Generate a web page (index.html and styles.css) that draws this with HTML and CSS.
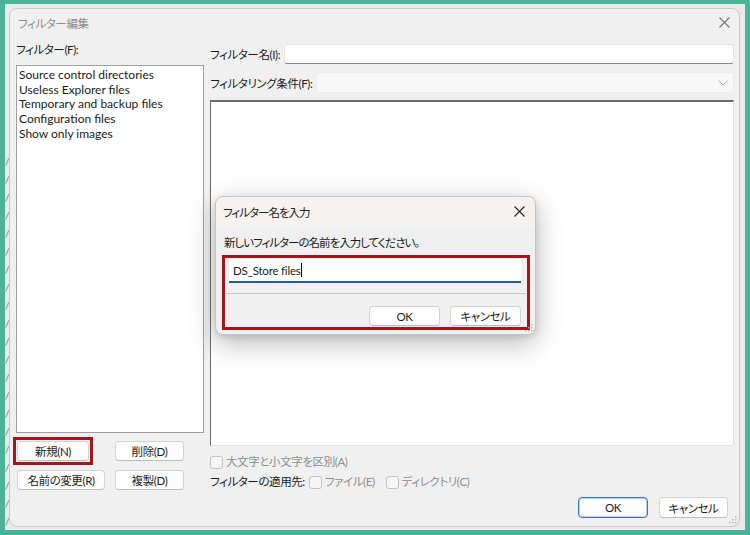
FILE: index.html
```html
<!DOCTYPE html><html lang="ja">
<head>
  <meta charset="UTF-8" />
  <meta name="viewport" content="width=device-width, initial-scale=1.0" />
  <title>フィルター編集</title>
  <link rel="stylesheet" href="styles.css">
</head>
<body>
  <div class="desk">
    <div class="behind">
      <span>/</span><span>/</span><span>/</span><span>/</span><span>/</span><span>/</span><span>/</span><span>/</span><span>/</span><span>/</span><span>/</span><span>/</span><span>/</span><span>/</span><span>/</span><span>/</span><span>/</span><span>/</span><span>/</span><span>/</span><span>/</span>
    </div>
    <div class="window">
      <div class="titlebar">
        <span class="title">フィルター編集</span>
        <svg class="close" width="11" height="11" viewBox="0 0 11 11"><path d="M0.5 0.5L10.5 10.5M10.5 0.5L0.5 10.5" stroke="#777" stroke-width="1.1" fill="none"/></svg>
      </div>
      <div class="content">
        <div class="left">
          <div class="label">フィルター(F):</div>
          <div class="listbox">
            <div>Source control directories</div>
            <div>Useless Explorer files</div>
            <div>Temporary and backup files</div>
            <div>Configuration files</div>
            <div>Show only images</div>
          </div>
          <div class="left-buttons">
            <span class="mark"><button class="btn new">新規(N)</button></span>
            <button class="btn">削除(D)</button>
            <button class="btn wide">名前の変更(R)</button>
            <button class="btn">複製(D)</button>
          </div>
        </div>
        <div class="right">
          <div class="field">
            <span class="field-label name">フィルター名(I):</span>
            <div class="input"></div>
          </div>
          <div class="field second">
            <span class="field-label cond">フィルタリング条件(F):</span>
            <div class="select">
              <svg width="10" height="6" viewBox="0 0 10 6"><path d="M0.5 0.5L5 5L9.5 0.5" stroke="#b0b0b0" stroke-width="1" fill="none"/></svg>
            </div>
          </div>
          <div class="pattern-box"></div>
          <div class="check-row muted"><span class="checkbox"></span>大文字と小文字を区別(A)</div>
          <div class="check-row apply">
            <span>フィルターの適用先:</span>
            <span class="check muted"><span class="checkbox"></span>ファイル(E)</span>
            <span class="check muted"><span class="checkbox"></span>ディレクトリ(C)</span>
          </div>
        </div>
      </div>
      <div class="footer">
        <button class="btn default">OK</button>
        <button class="btn">キャンセル</button>
      </div>
      <svg class="grip" width="8" height="8" viewBox="0 0 8 8"><g fill="#b5b5b5"><rect x="6" y="0" width="1.4" height="1.4"/><rect x="3" y="3" width="1.4" height="1.4"/><rect x="6" y="3" width="1.4" height="1.4"/><rect x="0" y="6" width="1.4" height="1.4"/><rect x="3" y="6" width="1.4" height="1.4"/><rect x="6" y="6" width="1.4" height="1.4"/></g></svg>
    </div>

    <div class="prompt">
      <div class="prompt-title">
        <span>フィルター名を入力</span>
        <svg width="11" height="11" viewBox="0 0 11 11"><path d="M0.5 0.5L10.5 10.5M10.5 0.5L0.5 10.5" stroke="#222" stroke-width="1.1" fill="none"/></svg>
      </div>
      <div class="prompt-body">
        <div class="prompt-msg">新しいフィルターの名前を入力してください。</div>
        <div class="prompt-area">
          <div class="prompt-input">DS_Store files<span class="caret"></span></div>
          <div class="sep"></div>
          <div class="prompt-buttons">
            <button class="btn">OK</button>
            <button class="btn">キャンセル</button>
          </div>
        </div>
      </div>
      <svg class="grip" width="8" height="8" viewBox="0 0 8 8"><g fill="#b5b5b5"><rect x="6" y="0" width="1.4" height="1.4"/><rect x="3" y="3" width="1.4" height="1.4"/><rect x="6" y="3" width="1.4" height="1.4"/><rect x="0" y="6" width="1.4" height="1.4"/><rect x="3" y="6" width="1.4" height="1.4"/><rect x="6" y="6" width="1.4" height="1.4"/></g></svg>
    </div>
  </div>
</body>
</html>
```

FILE: styles.css
```css
* {
  box-sizing: border-box;
}
body {
  margin: 0;
  width: 750px;
  height: 535px;
  padding: 4px 5px 5px 5px;
  background-color: #49b49a;
  font-family: Lato, "Noto Sans CJK JP", sans-serif;
  font-size: 11.5px;
  letter-spacing: -0.4px;
  font-feature-settings: "palt";
  color: #1b1b1b;
  overflow: hidden;
}
.desk {
  position: relative;
  width: 740px;
  height: 526px;
  background-color: #e9ebeb;
  padding: 4px 0 0 4px;
}
/* the app lying behind the window */
.behind {
  position: absolute;
  left: 0;
  top: 150px;
  width: 4px;
  display: flex;
  flex-direction: column;
  gap: 4px;
  font-size: 10px;
  line-height: 14px;
  color: #777;
  overflow: hidden;
}
.window {
  position: relative;
  width: 731px;
  height: 519px;
  background-color: #f0f0f0;
  border: 1px solid #c9c9c9;
  border-radius: 8px;
}
.titlebar {
  height: 27px;
  display: flex;
  align-items: center;
  justify-content: space-between;
  padding: 0 9px 0 8px;
}
.title {
  color: #8d8d8d;
}
.content {
  display: flex;
  gap: 6px;
  padding: 6px 0 0 6px;
}
.left {
  width: 188px;
}
.label {
  line-height: 16px;
  margin-bottom: 7px;
}
.listbox {
  height: 368px;
  background: #fff;
  border: 1px solid #9f9f9f;
  padding: 2px 2px;
  font-size: 12px;
  letter-spacing: 0;
  line-height: 14.7px;
}
.left-buttons {
  display: grid;
  grid-template-columns: 98px 69px;
  row-gap: 9px;
  margin-top: 8px;
  padding-left: 1px;
}
.btn {
  height: 20px;
  width: 69px;
  padding: 0;
  font-family: inherit;
  font-size: 11.5px;
  letter-spacing: -0.4px;
  font-feature-settings: "palt";
  color: #1b1b1b;
  background: #fdfdfd;
  border: 1px solid #d3d3d3;
  border-bottom-color: #bdbdbd;
  border-radius: 4px;
}
/* red annotation box round the "new" button */
.mark {
  position: relative;
  display: block;
  width: 72px;
  height: 20px;
}
.mark::after {
  content: '';
  position: absolute;
  left: -4px;
  top: -4px;
  right: -4px;
  bottom: -4px;
  border: 3px solid #a3161a;
}
.mark .new {
  width: 72px;
}
.left-buttons .wide {
  width: 88px;
}
.right {
  width: 524px;
  padding-top: 2px;
}
.field {
  display: flex;
  align-items: center;
  height: 20px;
}
.field.second {
  height: 21px;
  margin-top: 8px;
}
.field-label {
  white-space: nowrap;
  flex-shrink: 0;
}
.field-label.name {
  width: 74px;
}
.field-label.cond {
  width: 106px;
}
.input {
  flex: 1;
  height: 100%;
  background: #fff;
  border: 1px solid #e3e3e3;
  border-bottom: 1px solid #8a8a8a;
  border-radius: 3px;
}
.select {
  flex: 1;
  height: 100%;
  background: #f8f8f8;
  border: 1px solid #ececec;
  border-radius: 3px;
  display: flex;
  align-items: center;
  justify-content: flex-end;
  padding-right: 5px;
}
.pattern-box {
  height: 346px;
  margin-top: 7px;
  background: #fff;
  border: 1px solid #e3e3e3;
  border-top: 2px solid #6c6c6c;
  border-left: 1px solid #6c6c6c;
}
.check-row {
  display: flex;
  align-items: center;
  line-height: 16px;
  margin-top: 8px;
  white-space: nowrap;
}
.check-row.apply {
  margin-top: 4px;
}
.check {
  display: flex;
  align-items: center;
  margin-left: 4px;
}
.check + .check {
  margin-left: 11px;
}
.muted {
  color: #8e8e8e;
}
.checkbox {
  width: 13px;
  height: 13px;
  border: 1px solid #c3c3c3;
  border-radius: 3px;
  background: #f6f6f6;
  margin-right: 3px;
}
.footer {
  display: flex;
  justify-content: flex-end;
  gap: 11px;
  margin-top: 7px;
  padding-right: 11px;
}
.footer .btn {
  height: 21px;
}
.footer .default {
  width: 70px;
  border: 1px solid #3c77b5;
  box-shadow: inset 0 0 0 1px #b9d1ea;
}
.grip {
  position: absolute;
  right: 2px;
  bottom: 2px;
}
/* input dialog on top */
.prompt {
  position: absolute;
  left: 210px;
  top: 192px;
  width: 321px;
  height: 139px;
  background: #f0f0f0;
  border: 1px solid #c4c4c4;
  border-radius: 8px;
  box-shadow: 0 8px 28px rgba(0, 0, 0, 0.28), 0 2px 6px rgba(0, 0, 0, 0.12);
  font-size: 11.5px;
  letter-spacing: -1px;
}
.prompt-title {
  height: 29px;
  display: flex;
  align-items: center;
  justify-content: space-between;
  padding: 0 10px 0 7px;
  background: #f5f2ef;
  border-radius: 8px 8px 0 0;
  color: #222;
}
.prompt-body {
  padding: 9px 0 0 6px;
}
.prompt-msg {
  line-height: 16px;
  padding-left: 2px;
}
.prompt-area {
  width: 308px;
  height: 75px;
  margin-top: 4px;
  border: 3px solid #a3161a;
  padding: 1px 6px 0 4px;
}
.prompt-input {
  height: 24px;
  background: #fff;
  border-bottom: 2px solid #1f5fa6;
  border-radius: 3px 3px 0 0;
  padding-left: 4px;
  line-height: 23px;
  letter-spacing: -0.2px;
  display: flex;
  align-items: center;
}
.caret {
  width: 1px;
  height: 14px;
  background: #000;
}
.sep {
  height: 1px;
  background: #c9c9c9;
  margin: 10px -5px 0 -3px;
}
.prompt-buttons {
  display: flex;
  justify-content: flex-end;
  gap: 10px;
  margin-top: 12px;
}
.prompt-buttons .btn {
  width: 71px;
  letter-spacing: -0.4px;
}
```
